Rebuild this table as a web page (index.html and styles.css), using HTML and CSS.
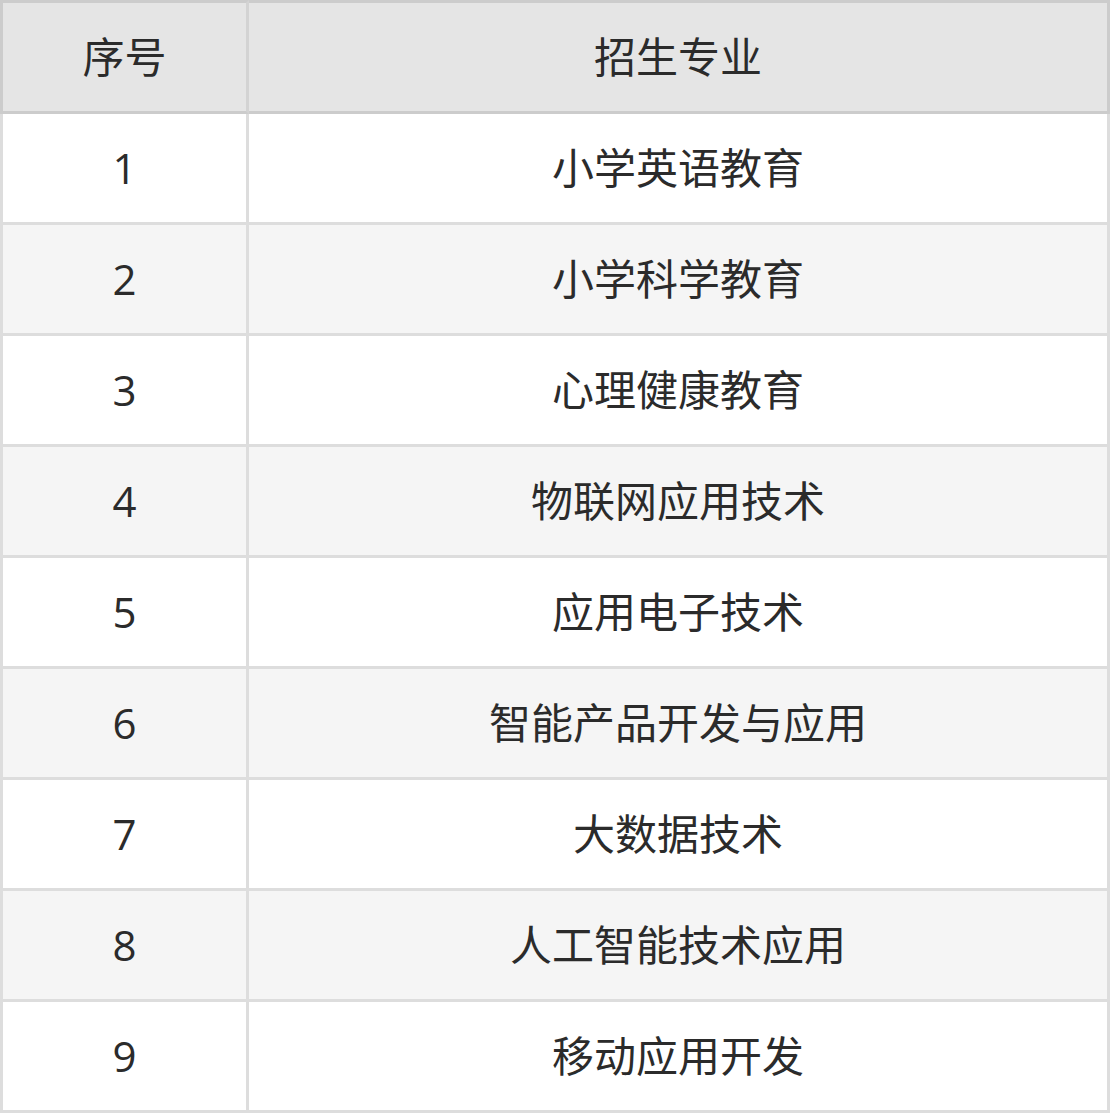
FILE: index.html
```html
<!DOCTYPE html>
<html lang="zh">
<head>
<meta charset="utf-8">
<title>招生专业</title>
<link rel="stylesheet" href="styles.css">
</head>
<body>
<table class="majors">
  <thead>
    <tr><th class="num">序号</th><th class="name">招生专业</th></tr>
  </thead>
  <tbody>
    <tr><td class="num">1</td><td class="name">小学英语教育</td></tr>
    <tr><td class="num">2</td><td class="name">小学科学教育</td></tr>
    <tr><td class="num">3</td><td class="name">心理健康教育</td></tr>
    <tr><td class="num">4</td><td class="name">物联网应用技术</td></tr>
    <tr><td class="num">5</td><td class="name">应用电子技术</td></tr>
    <tr><td class="num">6</td><td class="name">智能产品开发与应用</td></tr>
    <tr><td class="num">7</td><td class="name">大数据技术</td></tr>
    <tr><td class="num">8</td><td class="name">人工智能技术应用</td></tr>
    <tr><td class="num">9</td><td class="name">移动应用开发</td></tr>
  </tbody>
</table>
</body>
</html>
```

FILE: styles.css
```css
html, body {
  margin: 0;
  padding: 0;
  background: #ffffff;
}

.majors {
  width: 1110px;
  border-collapse: separate;
  border-spacing: 0;
  table-layout: fixed;
  font-family: "Open Sans", "Noto Sans CJK SC", sans-serif;
  font-size: 42px;
  color: #2b2b2b;
}

.majors th,
.majors td {
  padding: 0;
  height: 108px;
  line-height: 108px;
  text-align: center;
  font-weight: normal;
  white-space: nowrap;
}

.majors th {
  background: #e5e5e5;
  border-top: 3px solid #cccccc;
  border-bottom: 3px solid #cccccc;
  border-right: 3px solid #cccccc;
}

.majors th.num {
  width: 243px;
  border-left: 3px solid #cccccc;
  border-right-color: #d3d3d3;
}

.majors td {
  border-bottom: 3px solid #dddddd;
  border-right: 3px solid #dddddd;
}

.majors td.num {
  border-left: 3px solid #dddddd;
}

.majors tbody tr:nth-child(even) td {
  background: #f5f5f5;
}
```
